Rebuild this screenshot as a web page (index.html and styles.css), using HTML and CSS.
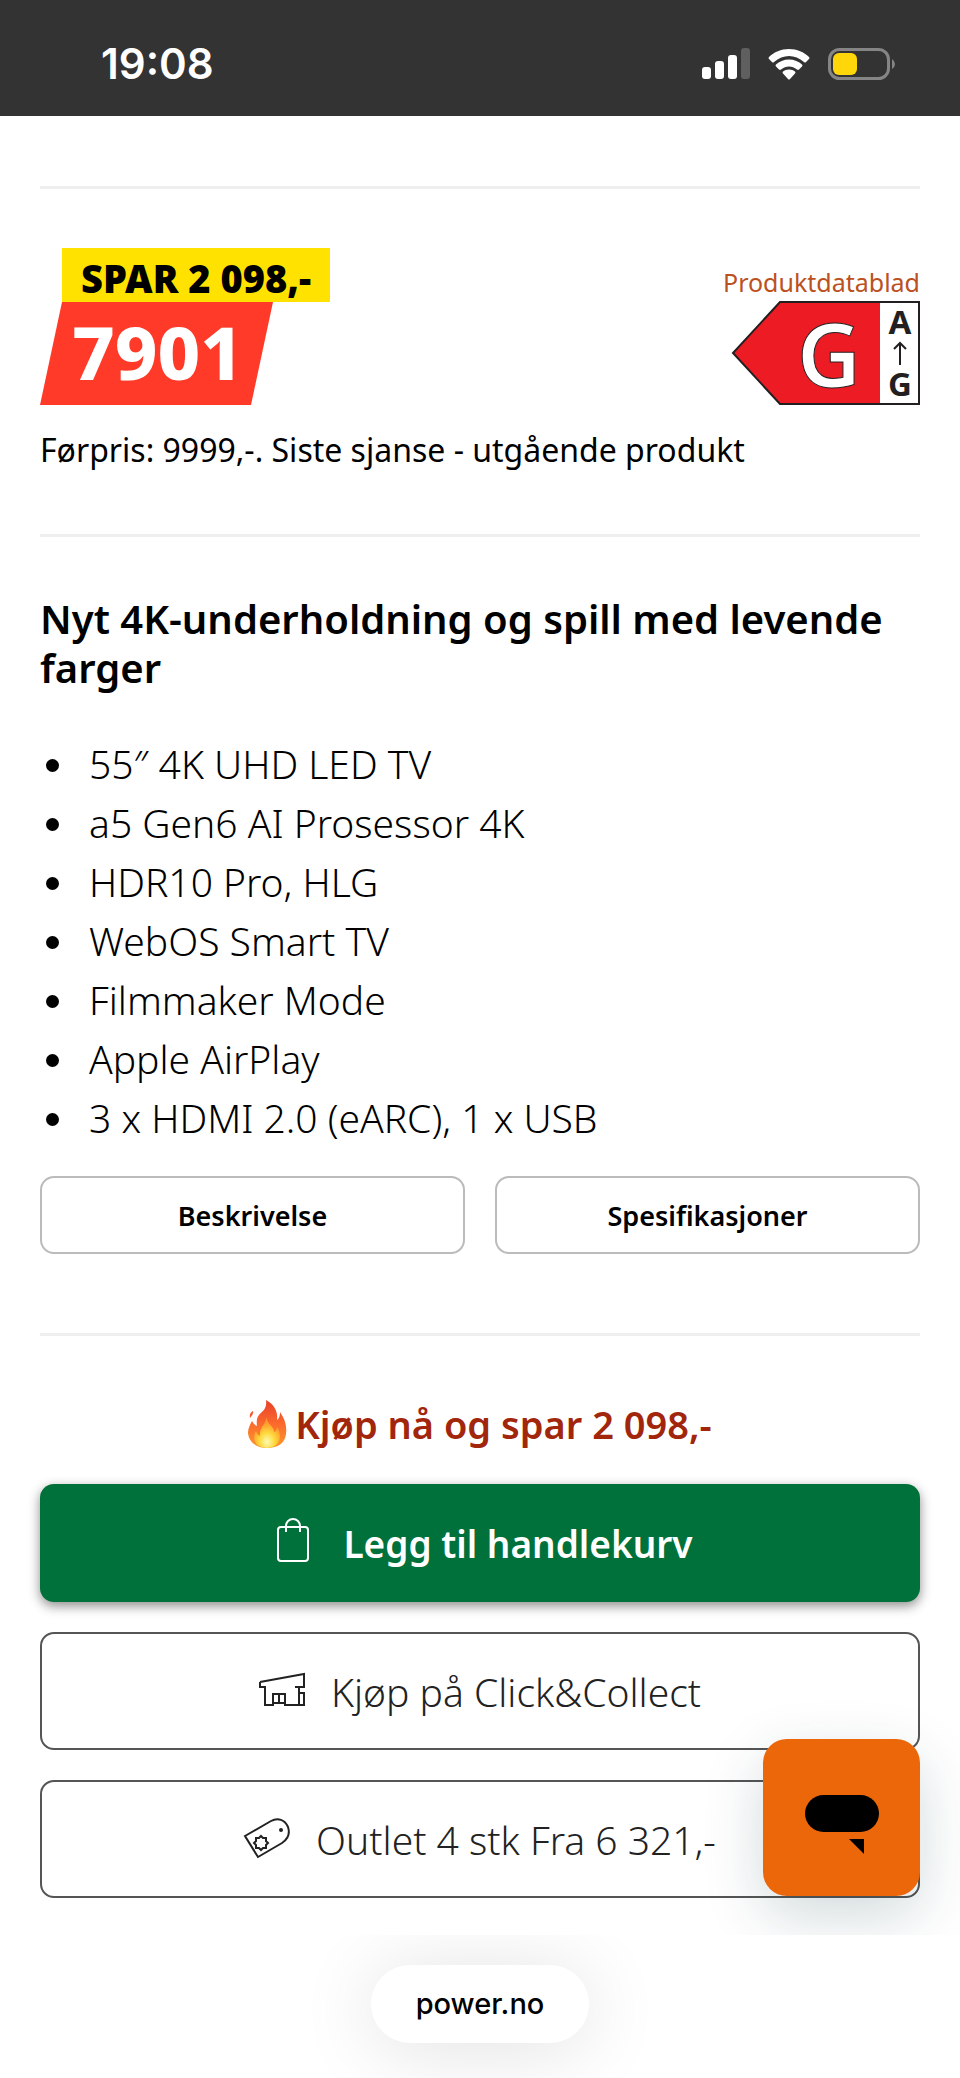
FILE: index.html
```html
<!DOCTYPE html>
<html lang="no">
<head>
<meta charset="utf-8">
<meta name="viewport" content="width=device-width, initial-scale=1">
<title>power.no</title>
<link rel="stylesheet" href="styles.css">
</head>
<body>
<header class="status">
  <time class="status-time">19:08</time>
  <div class="status-icons">
    <svg width="48" height="32" viewBox="0 0 48 32"><g fill="#fff"><rect x="0" y="19" width="9" height="12" rx="3"/><rect x="13" y="13" width="9" height="18" rx="3"/><rect x="26" y="7" width="9" height="24" rx="3"/></g><rect x="39" y="0" width="9" height="31" rx="3" fill="#5f5f5f"/></svg>
    <svg width="42" height="31" viewBox="0 0 42 31" fill="#fff"><path d="M21 0C29 0 36 3 41 8Q42 9 41 10L38 13Q37 14 36 13C27 5 15 5 6 13Q5 14 4 13L1 10Q0 9 1 8C6 3 13 0 21 0Z"/><path d="M21 10.500C26 10.500 31 12.500 34 15.500Q35 16.500 34 17.500L31 20.500Q30 21.300 29 20.500C24 16.500 18 16.500 13 20.500Q12 21.300 11 20.500L8 17.500Q7 16.500 8 15.500C11 12.500 16 10.500 21 10.500Z"/><path d="M21 20.500C23.500 20.500 25.500 21.300 27 22.600Q28 23.600 27 24.600L22 30Q21 31 20 30L15 24.600Q14 23.600 15 22.600C16.500 21.300 18.500 20.500 21 20.500Z"/></svg>
    <svg width="68" height="32" viewBox="0 0 68 32"><rect x="1.500" y="1.500" width="59" height="29" rx="10" fill="none" stroke="#858585" stroke-width="3"/><rect x="5" y="5" width="24" height="22" rx="6" fill="#ffd60a"/><path d="M64 11Q67 13 67 16Q67 19 64 21Z" fill="#858585"/></svg>
  </div>
</header>
<main class="product">
  <section class="offer">
    <div class="price-row">
      <div class="price">
        <div class="save">SPAR 2 098,-</div>
        <div class="amount">7901</div>
      </div>
      <div class="energy">
        <a href="#datablad" class="energy-link">Produktdatablad</a>
        <svg class="energy-label" width="188" height="104" viewBox="0 0 188 104" role="img" aria-label="Energiklasse G"><path d="M48 1H187V103H48L1 52Z" fill="#fff"/><path d="M48 1H148V103H48L1 52Z" fill="#ed1c24"/><path d="M48 1H187V103H48L1 52Z" fill="none" stroke="#231f20" stroke-width="2"/><text x="65" y="86" class="energy-grade">G</text><text x="168" y="33" class="energy-scale">A</text><text x="168" y="95" class="energy-scale">G</text><path d="M168 64V42M162 48L168 42L174 48" fill="none" stroke="#231f20" stroke-width="2"/></svg>
      </div>
    </div>
    <p class="before">Førpris: 9999,-. Siste sjanse - utgående produkt</p>
  </section>
  <section class="details">
    <h2 class="headline">Nyt 4K-underholdning og spill med levende farger</h2>
    <ul class="features">
      <li>55″ 4K UHD LED TV</li>
      <li>a5 Gen6 AI Prosessor 4K</li>
      <li>HDR10 Pro, HLG</li>
      <li>WebOS Smart TV</li>
      <li>Filmmaker Mode</li>
      <li>Apple AirPlay</li>
      <li>3 x HDMI 2.0 (eARC), 1 x USB</li>
    </ul>
    <div class="tabs">
      <button class="tab" type="button">Beskrivelse</button>
      <button class="tab" type="button">Spesifikasjoner</button>
    </div>
  </section>
  <section class="buy">
    <p class="campaign">
      <svg width="39" height="49" viewBox="0 0 39 49"><defs><linearGradient id="fire" x1="0" y1="0" x2="0" y2="1"><stop offset="0" stop-color="#e8402a"/><stop offset=".5" stop-color="#fb6a2c"/><stop offset="1" stop-color="#fb9a2c"/></linearGradient><radialGradient id="glow" cx=".5" cy=".8" r=".6"><stop offset="0" stop-color="#fffbb0"/><stop offset=".5" stop-color="#ffd83c"/><stop offset="1" stop-color="#ff9a2e"/></radialGradient></defs><path d="M18 0C27 5 30 12 29 20Q32 18 32 12C37 19 39 26 38 34C37 43 30 48 19 48C8 48 1 42 0 33C0 28 2 25 4 21Q6 25 9 26C8 18 10 15 15 11Q19 7 18 0ZM5 11Q6 14 2 18Q1 13 5 11Z" fill="url(#fire)"/><path d="M19 17C18 24 26 25 26 32Q29 31 29 27C34 34 34 47 19 48C6 47 4 38 8 31Q9 35 12 36C11 28 17 25 19 17Z" fill="url(#glow)"/></svg>
      <span>Kjøp nå og spar 2 098,-</span>
    </p>
    <button class="action primary" type="button">
      <svg width="32" height="50" viewBox="0 0 32 50" fill="none" stroke="#fff" stroke-width="2"><rect x="1" y="9" width="30" height="34" rx="3"/><path d="M9 14V8A7 7 0 0 1 23 8V14"/></svg>
      <span>Legg til handlekurv</span>
    </button>
    <button class="action store" type="button">
      <svg width="46" height="36" viewBox="0 0 46 36" fill="none" stroke="#222" stroke-width="2"><path d="M1 9L45 1V14H36M1 9V14H6V32H14V21H26V32H45V20H40M40 14V32M20 21V31M14 30H26"/></svg>
      <span>Kjøp på Click&amp;Collect</span>
    </button>
    <button class="action outlet" type="button">
      <svg width="46" height="42" viewBox="0 0 46 42" fill="none" stroke="#222" stroke-width="2"><path d="M1 18L27 3C34 -1 41 2 44 9C46 15 44 21 38 25L14 39Z"/><circle cx="37" cy="12" r="1" fill="#222"/><path d="M17 18L19 20H22V23L24 25L22 27V30H19L17 32L15 30H12V27L10 25L12 23V20H15Z"/></svg>
      <span>Outlet 4 stk Fra 6 321,-</span>
    </button>
    <button class="chat" type="button" aria-label="Chat">
      <svg width="74" height="60" viewBox="0 0 74 60"><rect width="74" height="37" rx="18.500"/><path d="M44 44H59V59Z"/></svg>
    </button>
  </section>
</main>
<footer class="browser"><a class="address" href="#top">power.no</a></footer>
</body>
</html>
```
FILE: styles.css
```css
* { box-sizing: border-box; }
body { margin: 0; background: #fff; color: #000; font-family: "Noto Sans", sans-serif; font-weight: 400; }
h2, p, ul { margin: 0; padding: 0; }
button { font-family: inherit; font-weight: inherit; color: inherit; }
svg { display: block; flex: none; overflow: visible; }

.status { height: 116px; padding: 12px 64px 0 101px; background: #333; color: #fff; display: flex; align-items: center; justify-content: space-between; }
.status-time { font: 600 42px/52px Inter, sans-serif; }
.status-icons { display: flex; align-items: center; gap: 18px; }

.product { padding: 70px 40px 0; }
.offer, .details, .buy { border-top: 3px solid #efefef; }
.offer { padding-top: 59px; }
.price-row { display: flex; justify-content: space-between; align-items: flex-end; }
.price { display: grid; justify-items: start; }
.save { margin-left: 22px; padding: 0 19px; height: 54px; background: #ffe200; font-size: 38px; line-height: 60px; font-weight: 900; }
.amount { width: 233px; height: 103px; padding-left: 32px; background: #ff3a29; clip-path: polygon(22px 0, 100% 0, 211px 100%, 0 100%); color: #fff; font-size: 74px; line-height: 100px; font-weight: 800; }
.energy { display: grid; justify-items: end; gap: 3px; }
.energy-link { color: #bb5021; text-decoration: none; font-size: 25px; line-height: 32px; }
.energy-grade { font: 600 88px "Noto Sans", sans-serif; fill: #fff; stroke: #231f20; stroke-width: 1px; }
.energy-scale { font: 700 33px "Noto Sans", sans-serif; fill: #231f20; text-anchor: middle; }
.before { padding: 22px 0 61px; font-size: 32px; line-height: 46px; }

.details { padding: 57px 0 79px; }
.headline { font-size: 40px; line-height: 49px; font-weight: 600; }
.features { padding: 42px 0 29px; list-style: none; font-size: 39px; line-height: 59px; font-weight: 300; }
.features li { display: flex; align-items: center; gap: 30px; padding-left: 6px; }
.features li::before { content: ""; width: 13px; height: 13px; margin-top: 4px; border-radius: 50%; background: #000; }
.tabs { display: grid; grid-template-columns: 1fr 1fr; gap: 30px; }
.tab { height: 78px; border: 2px solid #bbb; border-radius: 14px; background: #fff; font-size: 27px; font-weight: 600; }

.buy { position: relative; padding: 62px 0 37px; display: grid; gap: 30px; }
.campaign { display: flex; justify-content: center; align-items: center; gap: 8px; height: 56px; padding-bottom: 4px; color: #a1260c; font-size: 38px; font-weight: 600; }
.action { height: 118px; border: 2px solid #555; border-radius: 14px; background: #fff; color: #222; display: flex; justify-content: center; align-items: center; gap: 26px; font-size: 39px; font-weight: 300; }
.primary { border: 0; gap: 34px; padding-left: 16px; background: #00713b; color: #fff; font-size: 37px; font-weight: 600; box-shadow: 0 4px 12px rgba(0,0,0,.45); }
.chat { position: absolute; right: 0; bottom: 39px; width: 157px; height: 157px; padding: 14px 0 0; border: 0; border-radius: 24px; background: #eb6709; display: grid; place-items: center; box-shadow: 0 20px 60px rgba(0,50,60,.18); }

.browser { height: 143px; padding-top: 30px; background: #fff; position: relative; display: flex; justify-content: center; align-items: flex-start; overflow: hidden; }
.address { padding: 0 45px; border-radius: 39px; background: #fff; box-shadow: 0 6px 80px rgba(0,0,0,.12); color: #000; text-decoration: none; font: 500 29px/78px Inter, sans-serif; }
```
